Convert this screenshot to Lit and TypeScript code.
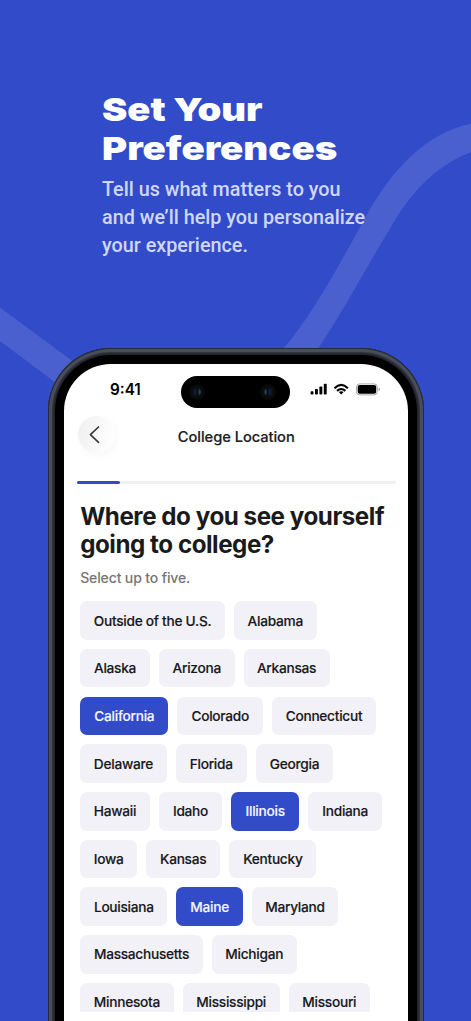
import { LitElement, html, css, svg } from 'lit';
import { customElement, property } from 'lit/decorators.js';
import { classMap } from 'lit/directives/class-map.js';

interface Choice { name: string; width: number; on?: boolean }
const c = (name: string, width: number, on = false): Choice => ({ name, width, on });

const rows: Choice[][] = [
  [c('Outside of the U.S.', 144.7), c('Alabama', 82.7)],
  [c('Alaska', 69.7), c('Arizona', 75.7), c('Arkansas', 86)],
  [c('California', 88.3, true), c('Colorado', 85.5), c('Connecticut', 104)],
  [c('Delaware', 86.5), c('Florida', 71), c('Georgia', 77.7)],
  [c('Hawaii', 69.7), c('Idaho', 63.3), c('Illinois', 68, true), c('Indiana', 74)],
  [c('Iowa', 57), c('Kansas', 74), c('Kentucky', 87.3)],
  [c('Louisiana', 87.3), c('Maine', 66.3, true), c('Maryland', 86.3)],
  [c('Massachusetts', 122.7), c('Michigan', 84.7)],
  [c('Minnesota', 93.5), c('Mississippi', 97), c('Missouri', 81.3)],
];

@customElement('state-chip')
export class StateChip extends LitElement {
  @property({ type: String }) label = '';
  @property({ type: Boolean }) on = false;
  static styles = css`
    :host { display: block; height: 38.5px; }
    .chip { height: 100%; border-radius: 7px; background: #f2f1f8; color: #19191c;
      display: flex; align-items: center; justify-content: center; white-space: nowrap;
      font: 500 13.7px Inter, sans-serif; letter-spacing: -0.27px; -webkit-text-stroke: 0.15px currentColor; }
    .on { background: #324bc8; color: #f4f5ff; }
  `;
  render() {
    return html`<div class=${classMap({ chip: true, on: this.on })}>${this.label}</div>`;
  }
}

@customElement('status-bar')
export class StatusBar extends LitElement {
  static styles = css`
    :host { display: grid; grid-template-columns: 117.4px 109px 1fr; height: 43px; padding-top: 12px; box-sizing: border-box; }
    .time { padding: 4.5px 0 0 46.5px; font: 600 15.3px/18px Inter, sans-serif; color: #000; }
    .island { height: 32px; border-radius: 16px; background: #000; display: flex; justify-content: space-between; align-items: center; padding: 0 14px 0 8px; box-sizing: border-box; }
    .icons { padding: 6.5px 0 0 20px; }
    svg { display: block; }
  `;
  lens(flip: boolean) {
    return html`<svg width="16" height="16" viewBox="0 0 16 16"><circle cx="8" cy="8" r="7.8" fill="#090a0c"/><circle cx="8" cy="8" r="5.4" fill="#0c0e14"/>
      <ellipse cx=${flip ? 5.6 : 10.6} cy="8" rx="1.1" ry="3" fill="#1c4a48"/><ellipse cx=${flip ? 10 : 6} cy="8" rx="1.7" ry="3.2" fill="#111a38"/></svg>`;
  }
  render() {
    return html`<div class="time">9:41</div>
      <div class="island">${this.lens(false)}${this.lens(true)}</div>
      <div class="icons"><svg width="72" height="15" viewBox="0 0 72 15">
        <rect x="0.6" y="8.2" width="2.9" height="3.4" rx=".8"/><rect x="5" y="5.9" width="2.9" height="5.7" rx=".8"/>
        <rect x="9.4" y="3.4" width="2.9" height="8.2" rx=".8"/><rect x="13.8" y="0.7" width="2.9" height="10.9" rx=".8"/>
        <g fill="none" stroke="#000" stroke-width="2.1"><path d="M24.5 5.2 Q31.2 -1.3 37.9 5.2"/><path d="M27 7.9 Q31.2 4.1 35.4 7.9"/></g>
        <path d="M28.8 9 Q31.2 7.3 33.6 9 L31.2 11.5Z"/>
        <rect x="46.500" y="0.9" width="20.8" height="11" rx="3.2" fill="none" stroke="#aaa" stroke-width="1"/>
        <rect x="47.700" y="2.1" width="18.5" height="8.600" rx="2"/>
        <path d="M68.6 4.7 Q70 5 70 6.4 T68.6 8.1Z" fill="#999"/>
      </svg></div>`;
  }
}

@customElement('app-root')
export class AppRoot extends LitElement {
  static styles = css`
    :host { display: block; width: 471px; height: 1021px; overflow: hidden; position: relative; background: #324bc8; font-family: Inter, sans-serif; }
    .ribbon { position: absolute; left: 0; top: 0; }
    .poster { position: relative; display: flex; flex-direction: column; }
    .intro { height: 348px; box-sizing: border-box; padding: 91px 0 0 102px; }
    .title { display: block; width: max-content; font: 900 32px/38.5px Inter, sans-serif; color: #fff; transform-origin: left; white-space: nowrap; }
    .first { transform: scaleX(1.19); }
    .second { transform: scaleX(1.198); }
    .copy { margin: 7.5px 0 0; font: 500 19.77px/28.4px Roboto, sans-serif; color: #d0d7f8; white-space: nowrap; }
    .phone { margin-left: 47.5px; width: 376.5px; height: 760px; box-sizing: border-box; border-radius: 63px; padding: 16px; background: #000;
      box-shadow: inset 0 0 0 1px #262a36, inset 0 0 0 4px #494e5c, inset 0 0 0 5.5px #30333c, inset 0 0 0 7px #22242a; }
    .screen { height: 720px; border-radius: 47px 47px 0 0; background: #fff; box-sizing: border-box; overflow: hidden; }
    .nav { display: grid; grid-template-columns: 64px 1fr 64px; height: 52px; margin-top: 1px; }
    .back { margin: 7.5px 0 0 14px; width: 37px; height: 37px; border-radius: 50%; background: linear-gradient(100deg, #efefef, #fbfbfb 65%, #fff); box-shadow: 2px 3px 9px #00000008; display: grid; place-items: center; }
    .back svg { margin: 1.5px 2px 0 0; }
    .heading { text-align: center; font: 500 14.7px/20px Inter, sans-serif; letter-spacing: -0.06px; color: #202022; -webkit-text-stroke: 0.15px #202022; padding: 19px 0 0 1px; }
    .track { margin: 20.5px 12.5px 0 13.3px; height: 3px; border-radius: 2px; background: #f0f0f1; }
    .fill { height: 3.5px; width: 43px; border-radius: 2px; background: #324bc8; }
    h1 { margin: 19.3px 0 0 16.7px; font: 700 24.2px/28.3px Inter, sans-serif; letter-spacing: -0.47px; color: #1a1a1c; white-space: nowrap; }
    .hint { margin: 9px 0 0 16.7px; font: 500 14px/20px Inter, sans-serif; letter-spacing: -0.13px; color: #747476; }
    .choices { margin: 12.9px 0 0 16.7px; height: 411px; overflow: hidden; display: flex; flex-direction: column; gap: 9.2px; }
    .row { display: flex; gap: 9px; flex: none; }
  `;
  render() {
    return html`
      <svg class="ribbon" width="471" height="1021" viewBox="0 0 471 1021">${svg`
        <path d="M-20 293 L0 307.5 L90 374 L72 395 L0 341 L-20 327Z" fill="#4a60cf"/>
        <path d="M471 123.5 C425 134 393 168 365 218 C338 267 314 312 284 348 L280 360 L312 360 L318.500 348 C348 303 367 266 391 227 C414 187 440 164 471 152Z" fill="#4a60cf"/>`}
      </svg>
      <div class="poster">
        <div class="intro">
          <span class="title first">Set Your</span>
          <span class="title second">Preferences</span>
          <p class="copy">Tell us what matters to you<br>and we’ll help you personalize<br>your experience.</p>
        </div>
        <div class="phone"><div class="screen">
          <status-bar></status-bar>
          <div class="nav">
            <div class="back"><svg width="14" height="20" viewBox="0 0 14 20"><path d="M10.500 2 L2.400 9.700 L10.500 17.400" fill="none" stroke="#3b3b3d" stroke-width="1.7" stroke-linecap="round" stroke-linejoin="round"/></svg></div>
            <div class="heading">College Location</div>
          </div>
          <div class="track"><div class="fill"></div></div>
          <h1>Where do you see yourself<br>going to college?</h1>
          <div class="hint">Select up to five.</div>
          <div class="choices">${rows.map(r => html`<div class="row">${r.map(x => html`
            <state-chip style="width:${x.width}px" .label=${x.name} .on=${!!x.on}></state-chip>`)}</div>`)}
          </div>
        </div></div>
      </div>`;
  }
}
